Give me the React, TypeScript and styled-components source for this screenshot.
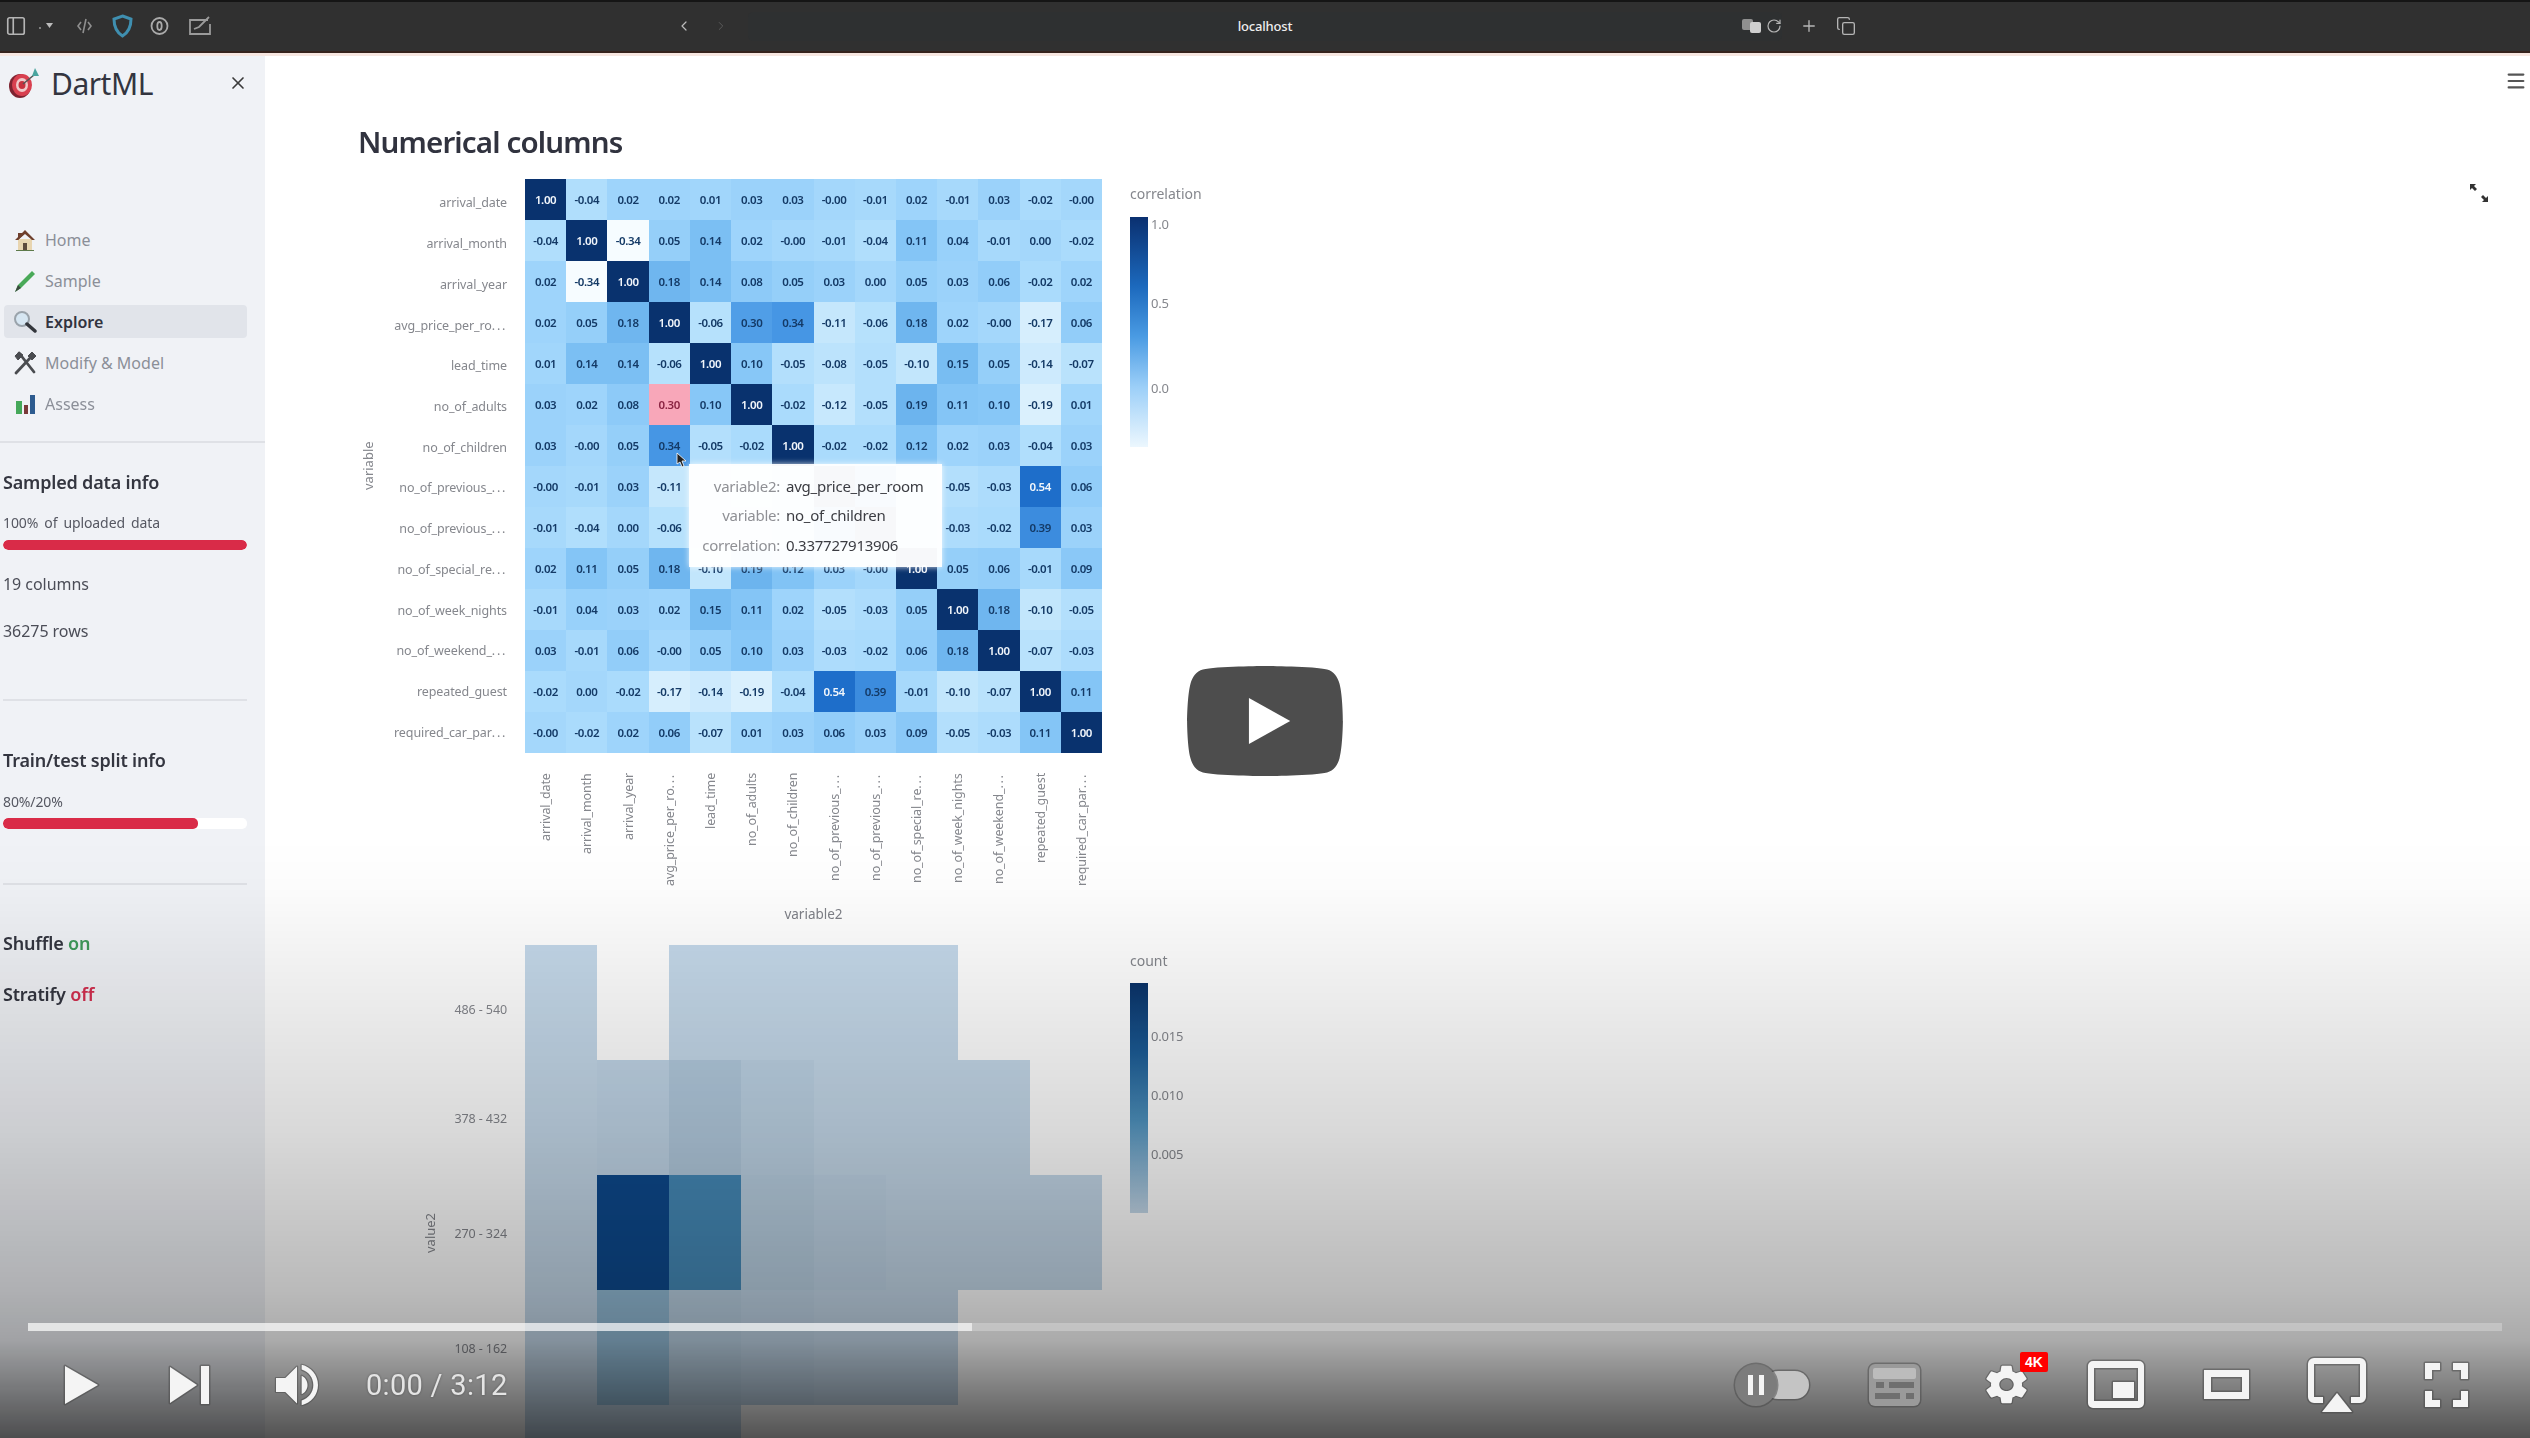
import React from 'react';
import styled, { createGlobalStyle } from 'styled-components';
import { ChevronLeft, ChevronRight, Copy, Menu, PanelLeft, Plus, RotateCw, X } from 'lucide-react';

const GlobalStyle = createGlobalStyle`
  html, body {
    margin: 0;
    padding: 0;
    height: 100%;
    overflow: hidden;
    background: #fff;
    font-family: "Noto Sans", "Open Sans", sans-serif;
  }
  * { box-sizing: border-box; }
`;

const Frame = styled.div`
  position: relative;
  width: 2530px;
  height: 1438px;
  overflow: hidden;
`;

const Page = styled.div`
  width: 100%;
  height: 100%;
  display: flex;
  flex-direction: column;
  filter: blur(0.7px);
`;

/* browser chrome */
const BrowserBar = styled.header`
  height: 56px;
  flex: none;
  display: flex;
  align-items: center;
  padding: 2px 0 5px 5px;
  background: #303030;
  border-top: 2px solid #151515;
  border-bottom: 3px solid #f7e6e0;
  box-shadow: inset 0 -2px 0 #35221c;
  color: #b5b5b5;
`;

const ToolSlot = styled.span<{ $ml?: number; $w: number }>`
  display: inline-flex;
  align-items: center;
  justify-content: center;
  flex: none;
  width: ${(p) => p.$w}px;
  margin-left: ${(p) => p.$ml ?? 0}px;
`;

const UrlBar = styled.div`
  flex: none;
  width: 1034px;
  height: 29px;
  margin-left: 20px;
  display: flex;
  align-items: center;
  border-radius: 5px;
  background: #2e3031;
`;

const UrlSide = styled.div`
  flex: 1;
  display: flex;
  justify-content: flex-end;
  align-items: center;
  gap: 4px;
`;

const UrlText = styled.span`
  font-size: 13px;
  font-weight: 500;
  color: #eee;
  letter-spacing: -0.2px;
`;

/* app body */
const Body = styled.div`
  flex: 1;
  display: flex;
  min-height: 0;
`;

const Sidebar = styled.aside`
  flex: none;
  width: 265px;
  padding: 8px 0 0 3px;
  background: #f0f2f6;
  color: #31333f;
`;

const BrandRow = styled.div`
  height: 38px;
  display: flex;
  align-items: center;
  margin-left: 5px;
`;

const BrandName = styled.span`
  margin-left: 11px;
  font-size: 30px;
  letter-spacing: -0.5px;
  color: #33353f;
`;

const CloseButton = styled.span`
  display: flex;
  margin-left: auto;
  margin-right: 17px;
  color: #3a3a3a;
`;

const Nav = styled.nav`
  margin-top: 121px;
  display: flex;
  flex-direction: column;
  gap: 8px;
`;

const NavItem = styled.div<{ $active?: boolean }>`
  width: 243px;
  height: 33px;
  margin-left: 1px;
  padding-left: 9px;
  display: flex;
  align-items: center;
  gap: 8px;
  border-radius: 4px;
  font-size: 16px;
  font-weight: ${(p) => (p.$active ? 600 : 400)};
  color: ${(p) => (p.$active ? '#31333f' : '#8b8f98')};
  background: ${(p) => (p.$active ? '#e1e4ea' : 'transparent')};
`;

const Divider = styled.hr<{ $mt: number; $full?: boolean }>`
  height: 2px;
  border: 0;
  margin: ${(p) => p.$mt}px 0 0 ${(p) => (p.$full ? -3 : 0)}px;
  width: ${(p) => (p.$full ? 265 : 244)}px;
  background: #dfe1e6;
`;

const SideHeading = styled.h4<{ $mt: number }>`
  margin: ${(p) => p.$mt}px 0 0;
  font-size: 18px;
  line-height: 24px;
  font-weight: 600;
  letter-spacing: -0.01em;
  color: #343640;
`;

const SideCaption = styled.div<{ $mt: number }>`
  margin-top: ${(p) => p.$mt}px;
  font-size: 14px;
  line-height: 18px;
  letter-spacing: -0.1px;
  word-spacing: 2.5px;
  color: #565862;
`;

const SideText = styled.div<{ $mt: number }>`
  margin-top: ${(p) => p.$mt}px;
  font-size: 16px;
  line-height: 20px;
  letter-spacing: -0.05px;
  color: #4b4d57;
`;

const Meter = styled.div<{ $mt: number; $h: number }>`
  width: 244px;
  height: ${(p) => p.$h}px;
  margin-top: ${(p) => p.$mt}px;
  border-radius: 5px;
  background: #fff;
  overflow: hidden;
`;

const MeterFill = styled.div`
  height: 100%;
  border-radius: 5px;
  background: #d92b48;
`;

const Flag = styled.span<{ $on?: boolean }>`
  color: ${(p) => (p.$on ? '#3f9a5a' : '#d32f4f')};
`;

const Main = styled.main`
  flex: 1;
  min-width: 0;
  padding-left: 93px;
  background: #fff;
`;

const TopRow = styled.div`
  height: 66px;
  padding: 14px 3px 0 0;
  display: flex;
  justify-content: flex-end;
  color: #555;
`;

const Title = styled.h2`
  margin: 0 0 17px;
  font-size: 29.5px;
  line-height: 40px;
  font-weight: 600;
  letter-spacing: -0.85px;
  color: #31333f;
`;

const PlotRow = styled.section<{ $mb?: number }>`
  display: flex;
  align-items: flex-start;
  margin-bottom: ${(p) => p.$mb ?? 0}px;
`;

const AxisTitle = styled.div<{ $ml?: number; $h: number }>`
  flex: none;
  width: 20px;
  height: ${(p) => p.$h}px;
  margin-left: ${(p) => p.$ml ?? 0}px;
  display: flex;
  align-items: center;
  justify-content: center;
  writing-mode: vertical-rl;
  transform: rotate(180deg);
  font-size: 13px;
  color: #85878d;
`;

const TickColumn = styled.div<{ $w: number }>`
  flex: none;
  width: ${(p) => p.$w}px;
  padding-right: 18px;
  display: flex;
  flex-direction: column;
`;

const RowTick = styled.div<{ $h: number; $pt: number }>`
  height: ${(p) => p.$h}px;
  padding-top: ${(p) => p.$pt}px;
  display: flex;
  align-items: center;
  justify-content: flex-end;
  white-space: nowrap;
  font-size: 12.5px;
  letter-spacing: -0.1px;
  color: #85878d;
`;

const Dots = styled.span`
  letter-spacing: 1.7px;
`;

const PlotColumn = styled.div`
  flex: none;
  width: 577px;
  display: flex;
  flex-direction: column;
`;

const HeatWrap = styled.div`
  position: relative;
`;

const HeatGrid = styled.div<{ $cols: number; $rowH: number }>`
  display: grid;
  grid-template-columns: repeat(${(p) => p.$cols}, 1fr);
  grid-auto-rows: ${(p) => p.$rowH}px;
`;

const HeatCell = styled.div<{ $light?: boolean }>`
  display: flex;
  align-items: center;
  justify-content: center;
  font-size: 11.5px;
  font-weight: 600;
  letter-spacing: -0.4px;
  color: ${(p) => (p.$light ? '#f2f6fb' : '#143a66')};
`;

const ColLabels = styled.div`
  margin-top: 20px;
  height: 120px;
  display: grid;
  grid-template-columns: repeat(14, 1fr);
`;

const ColLabel = styled.div`
  display: flex;
  justify-content: center;
`;

const ColLabelText = styled.span`
  height: 120px;
  writing-mode: vertical-rl;
  transform: rotate(180deg);
  text-align: right;
  white-space: nowrap;
  font-size: 12.5px;
  letter-spacing: -0.1px;
  color: #85878d;
`;

const XTitle = styled.div`
  margin-top: 13px;
  text-align: center;
  font-size: 13.5px;
  line-height: 16px;
  color: #7f8188;
`;

const Legend = styled.div<{ $pt: number; $gap: number }>`
  flex: none;
  margin-left: 28px;
  padding-top: ${(p) => p.$pt}px;
  display: flex;
  flex-direction: column;
  gap: ${(p) => p.$gap}px;
`;

const LegendTitle = styled.div`
  font-size: 14px;
  line-height: 16px;
  color: #85878d;
`;

const LegendBody = styled.div`
  display: flex;
  gap: 3px;
`;

const ColorBar = styled.div<{ $count?: boolean }>`
  width: 18px;
  height: 230px;
  background: ${(p) =>
    p.$count
      ? 'linear-gradient(#0a3268, #1c5c96 30%, #4f93bf 60%, #c5d9ea)'
      : 'linear-gradient(#0a3070, #1c69bd 30%, #4a9be3 52%, #9ccff8 74%, #ecf7fe)'};
`;

const LegendTicks = styled.div`
  display: flex;
  flex-direction: column;
`;

const LegendTick = styled.div<{ $mt: number }>`
  margin-top: ${(p) => p.$mt}px;
  font-size: 13px;
  line-height: 16px;
  letter-spacing: -0.2px;
  color: #85878d;
`;

const ExpandButton = styled.span`
  display: flex;
  margin: 4px 41px 0 auto;
`;

const HoverCard = styled.div`
  position: absolute;
  left: 164px;
  top: 285px;
  width: 253px;
  height: 103px;
  padding: 7px 0 0 6px;
  display: grid;
  grid-template-columns: 85px auto;
  grid-auto-rows: 29.5px;
  column-gap: 6px;
  align-items: center;
  background: rgba(255, 255, 255, 0.97);
  box-shadow: 0 0 6px rgba(255, 255, 255, 0.8);
  font-size: 15px;
  letter-spacing: -0.25px;
  white-space: nowrap;
`;

const HoverKey = styled.span`
  text-align: right;
  color: #8f9095;
`;

const HoverValue = styled.span`
  color: #3b3c42;
`;

const Cursor = styled.svg`
  position: absolute;
  left: 151px;
  top: 273px;
`;

/* player chrome, lying over the video frame */
const Player = styled.div`
  position: absolute;
  left: 0;
  right: 0;
  bottom: 0;
  height: 600px;
  display: flex;
  flex-direction: column;
  justify-content: flex-end;
  background: linear-gradient(
    rgba(0, 0, 0, 0) 0,
    rgba(0, 0, 0, 0.01) 49px,
    rgba(0, 0, 0, 0.06) 130px,
    rgba(0, 0, 0, 0.15) 292px,
    rgba(0, 0, 0, 0.27) 452px,
    rgba(0, 0, 0, 0.33) 502px,
    rgba(0, 0, 0, 0.5) 550px,
    rgba(0, 0, 0, 0.68) 600px
  );
`;

const BigPlay = styled.svg`
  position: absolute;
  left: 50%;
  top: 721px;
  transform: translate(-50%, -50%);
`;

const ProgressTrack = styled.div`
  height: 8px;
  margin: 0 28px;
  background: rgba(255, 255, 255, 0.25);
`;

const ProgressLoaded = styled.div`
  width: 944px;
  height: 100%;
  background: rgba(255, 255, 255, 0.6);
`;

const Controls = styled.div`
  height: 107px;
  display: flex;
  align-items: center;
  justify-content: space-between;
  padding: 0 60px 0 63px;
`;

const ControlGroup = styled.div`
  display: flex;
  align-items: center;
`;

const PlayerIcon = styled.svg<{ $ml?: number }>`
  flex: none;
  margin-left: ${(p) => p.$ml ?? 0}px;
  overflow: visible;
  fill: #f4f4f4;
  stroke: rgba(70, 70, 70, 0.5);
  stroke-width: 3px;
  stroke-linejoin: round;
  paint-order: stroke;
`;

const TimeText = styled.span`
  margin-left: 48px;
  font-family: Roboto, "Liberation Sans", sans-serif;
  font-size: 29px;
  letter-spacing: 0.3px;
  color: #e4e4e4;
  text-shadow: 0 0 3px rgba(0, 0, 0, 0.35);
`;

const SettingsSlot = styled.span`
  position: relative;
  display: flex;
  margin-left: 63px;
`;

const QualityBadge = styled.span`
  position: absolute;
  left: 36px;
  top: -9px;
  width: 28px;
  height: 20px;
  display: flex;
  align-items: center;
  justify-content: center;
  border-radius: 2px;
  background: #f00;
  color: #fff;
  font-family: "Liberation Sans", sans-serif;
  font-size: 14px;
  font-weight: 700;
`;

/* heatmap data */
const VARS = [
  'arrival_date', 'arrival_month', 'arrival_year', 'avg_price_per_ro...', 'lead_time', 'no_of_adults',
  'no_of_children', 'no_of_previous_...', 'no_of_previous_...', 'no_of_special_re...', 'no_of_week_nights',
  'no_of_weekend_...', 'repeated_guest', 'required_car_par...',
];

const CORR = [
  ['1.00', '-0.04', '0.02', '0.02', '0.01', '0.03', '0.03', '-0.00', '-0.01', '0.02', '-0.01', '0.03', '-0.02', '-0.00'],
  ['-0.04', '1.00', '-0.34', '0.05', '0.14', '0.02', '-0.00', '-0.01', '-0.04', '0.11', '0.04', '-0.01', '0.00', '-0.02'],
  ['0.02', '-0.34', '1.00', '0.18', '0.14', '0.08', '0.05', '0.03', '0.00', '0.05', '0.03', '0.06', '-0.02', '0.02'],
  ['0.02', '0.05', '0.18', '1.00', '-0.06', '0.30', '0.34', '-0.11', '-0.06', '0.18', '0.02', '-0.00', '-0.17', '0.06'],
  ['0.01', '0.14', '0.14', '-0.06', '1.00', '0.10', '-0.05', '-0.08', '-0.05', '-0.10', '0.15', '0.05', '-0.14', '-0.07'],
  ['0.03', '0.02', '0.08', '0.30', '0.10', '1.00', '-0.02', '-0.12', '-0.05', '0.19', '0.11', '0.10', '-0.19', '0.01'],
  ['0.03', '-0.00', '0.05', '0.34', '-0.05', '-0.02', '1.00', '-0.02', '-0.02', '0.12', '0.02', '0.03', '-0.04', '0.03'],
  ['-0.00', '-0.01', '0.03', '-0.11', '-0.08', '-0.12', '-0.02', '1.00', '0.47', '0.03', '-0.05', '-0.03', '0.54', '0.06'],
  ['-0.01', '-0.04', '0.00', '-0.06', '-0.05', '-0.05', '-0.02', '0.47', '1.00', '-0.00', '-0.03', '-0.02', '0.39', '0.03'],
  ['0.02', '0.11', '0.05', '0.18', '-0.10', '0.19', '0.12', '0.03', '-0.00', '1.00', '0.05', '0.06', '-0.01', '0.09'],
  ['-0.01', '0.04', '0.03', '0.02', '0.15', '0.11', '0.02', '-0.05', '-0.03', '0.05', '1.00', '0.18', '-0.10', '-0.05'],
  ['0.03', '-0.01', '0.06', '-0.00', '0.05', '0.10', '0.03', '-0.03', '-0.02', '0.06', '0.18', '1.00', '-0.07', '-0.03'],
  ['-0.02', '0.00', '-0.02', '-0.17', '-0.14', '-0.19', '-0.04', '0.54', '0.39', '-0.01', '-0.10', '-0.07', '1.00', '0.11'],
  ['-0.00', '-0.02', '0.02', '0.06', '-0.07', '0.01', '0.03', '0.06', '0.03', '0.09', '-0.05', '-0.03', '0.11', '1.00'],
];

const SCALE: [number, number[]][] = [
  [-0.34, [246, 252, 255]],
  [-0.17, [214, 238, 253]],
  [-0.06, [182, 225, 252]],
  [0.02, [158, 212, 251]],
  [0.11, [132, 197, 246]],
  [0.19, [108, 180, 238]],
  [0.34, [70, 150, 228]],
  [0.54, [30, 110, 202]],
  [0.7, [16, 84, 160]],
  [1, [9, 50, 110]],
];

function corrColor(v: number): string {
  for (let i = 1; i < SCALE.length; i++) {
    const [hi, hiC] = SCALE[i];
    const [lo, loC] = SCALE[i - 1];
    if (v <= hi) {
      const t = (v - lo) / (hi - lo);
      const c = loC.map((x, k) => Math.round(x + (hiC[k] - x) * t));
      return `rgb(${c.join(',')})`;
    }
  }
  return 'rgb(9,50,110)';
}

// cells the hover card sits fully on top of have no visible value
const hiddenByCard = (r: number, c: number) => (r === 7 || r === 8) && c >= 4 && c <= 9;

function tickLabel(name: string) {
  if (!name.endsWith('...')) return name;
  return (
    <>
      {name.slice(0, -3)}
      <Dots>...</Dots>
    </>
  );
}

const L = '#c5d9ea';
const DENSITY: (string | null)[][] = [
  [L, null, L, L, L, L, null, null],
  [L, '#c1d6e8', '#b3cbdf', '#bed4e6', L, L, L, null],
  [L, '#0e4a8e', '#468bb9', '#bbd2e4', '#c1d6e8', L, L, L],
  [L, '#94bdd8', '#bbd2e4', '#c1d6e8', L, L, null, null],
  [L, L, L, null, null, null, null, null],
];

function TargetLogo() {
  return (
    <svg width="32" height="32" viewBox="0 0 32 32">
      <ellipse cx="12" cy="19" rx="11" ry="12" fill="#7d2330" />
      <ellipse cx="14" cy="18" rx="10" ry="11" fill="#d8404f" />
      <ellipse cx="14" cy="18" rx="6" ry="7" fill="#f1c9c9" />
      <ellipse cx="14" cy="18" rx="3.5" ry="4" fill="#c8323f" />
      <path d="M15 17 L26 8" stroke="#555" strokeWidth="1.5" />
      <path d="M24 9 L27 1 L31 9 Z" fill="#4aa59f" />
    </svg>
  );
}

const NAV: { label: string; active?: boolean; icon: React.ReactNode }[] = [
  {
    label: 'Home',
    icon: (
      <svg width="24" height="24" viewBox="0 0 24 24">
        <path d="M5 11 H19 V22 H5 Z" fill="#e8d5b0" />
        <path d="M2 12 L12 2 L22 12 L19 12 L12 6 L5 12 Z" fill="#6e3f2c" />
        <path d="M5 5 H12 L5 12 Z" fill="#6e3f2c" />
        <path d="M10 15 H14 V22 H10 Z" fill="#5d4a3c" />
        <path d="M3 22 H21 V23 H3 Z" fill="#5d7a4a" />
      </svg>
    ),
  },
  {
    label: 'Sample',
    icon: (
      <svg width="24" height="24" viewBox="0 0 24 24">
        <path d="M2 23 L5 16 L19 2 L22 5 L8 19 Z" fill="#49a958" />
        <path d="M2 23 L5 16 L8 19 Z" fill="#3b4a3e" />
      </svg>
    ),
  },
  {
    label: 'Explore',
    active: true,
    icon: (
      <svg width="24" height="24" viewBox="0 0 24 24">
        <circle cx="9" cy="9" r="7" fill="#d6e6f2" stroke="#9aa3ab" strokeWidth="2" />
        <path d="M14 14 L22 21" stroke="#33363c" strokeWidth="3.5" strokeLinecap="round" />
      </svg>
    ),
  },
  {
    label: 'Modify & Model',
    icon: (
      <svg width="24" height="24" viewBox="0 0 24 24" fill="none" stroke="#4a4c50" strokeWidth="2.8">
        <path d="M3 22 L18 6 M6 2 L21 21" strokeLinecap="round" />
        <path d="M15 5 L19 1 L23 5 L19 9 Z" fill="#4a4c50" strokeWidth="1" />
        <path d="M2 5 L6 1 L10 4 L5 9 Z" fill="#4a4c50" strokeWidth="1" />
      </svg>
    ),
  },
  {
    label: 'Assess',
    icon: (
      <svg width="24" height="24" viewBox="0 0 24 24">
        <path d="M3 9 H9 V22 H3 Z" fill="#45a85a" />
        <path d="M11 13 H15 V22 H11 Z" fill="#7a3a3a" />
        <path d="M17 3 H22 V22 H17 Z" fill="#2d5b8f" />
      </svg>
    ),
  },
];

function App() {
  const tickH = 40.73;
  return (
    <Frame>
      <GlobalStyle />
      <Page>
        <BrowserBar>
          <ToolSlot $w={22}><PanelLeft size={22} strokeWidth={1.8} /></ToolSlot>
          <ToolSlot $w={18} $ml={11}>
            <svg width="18" height="10" viewBox="0 0 18 10">
              <circle cx="2" cy="7" r="1" fill="#999" />
              <path d="M8 2 L15 2 L11.5 7 Z" fill="#bbb" />
            </svg>
          </ToolSlot>
          <ToolSlot $w={15} $ml={21}>
            <svg width="15" height="18" viewBox="0 0 15 18" fill="none" stroke="#8f8f8f" strokeWidth="1.6">
              <path d="M4 5 L1 9 L4 13 M11 5 L14 9 L11 13 M9 2 L6 16" />
            </svg>
          </ToolSlot>
          <ToolSlot $w={21} $ml={20}>
            <svg width="21" height="24" viewBox="0 0 21 24" fill="none" stroke="#3f8fb0" strokeWidth="3">
              <path d="M10.5 2 L19 5 C19 13 17 18 10.5 22 C4 18 2 13 2 5 Z" />
            </svg>
          </ToolSlot>
          <ToolSlot $w={19} $ml={17}>
            <svg width="19" height="20" viewBox="0 0 19 20" fill="none" stroke="#aaa" strokeWidth="1.8">
              <circle cx="9.5" cy="10" r="8" />
              <ellipse cx="9.5" cy="10" rx="2.2" ry="4" />
            </svg>
          </ToolSlot>
          <ToolSlot $w={26} $ml={19}>
            <svg width="26" height="20" viewBox="0 0 26 20" fill="none" stroke="#9a9a9a" strokeWidth="1.8">
              <path d="M20 4 H2 V18 H22 V8" />
              <path d="M6 13 L11 11 L21 1" />
            </svg>
          </ToolSlot>
          <ToolSlot $w={16} $ml={462}><ChevronLeft size={26} strokeWidth={1.8} color="#bbb" /></ToolSlot>
          <ToolSlot $w={14} $ml={22}><ChevronRight size={24} strokeWidth={1.6} color="#5d5d5d" /></ToolSlot>
          <UrlBar>
            <UrlSide />
            <UrlText>localhost</UrlText>
            <UrlSide>
              <svg width="21" height="18" viewBox="0 0 21 18">
                <rect x="1" y="2" width="11" height="11" rx="2" fill="#8f8f8f" />
                <rect x="9" y="5" width="11" height="11" rx="2" fill="#cfcfcf" />
              </svg>
              <RotateCw size={16} strokeWidth={1.8} />
            </UrlSide>
          </UrlBar>
          <ToolSlot $w={18} $ml={18}><Plus size={18} strokeWidth={1.8} /></ToolSlot>
          <ToolSlot $w={20} $ml={18}><Copy size={20} strokeWidth={1.6} /></ToolSlot>
        </BrowserBar>

        <Body>
          <Sidebar>
            <BrandRow>
              <TargetLogo />
              <BrandName>DartML</BrandName>
              <CloseButton><X size={20} strokeWidth={2} /></CloseButton>
            </BrandRow>
            <Nav>
              {NAV.map((item) => (
                <NavItem key={item.label} $active={item.active}>
                  {item.icon}
                  {item.label}
                </NavItem>
              ))}
            </Nav>
            <Divider $mt={21} $full />
            <SideHeading $mt={27}>Sampled data info</SideHeading>
            <SideCaption $mt={20}>100% of uploaded data</SideCaption>
            <Meter $mt={8} $h={10}><MeterFill style={{ width: '100%' }} /></Meter>
            <SideText $mt={24}>19 columns</SideText>
            <SideText $mt={27}>36275 rows</SideText>
            <Divider $mt={58} />
            <SideHeading $mt={47}>Train/test split info</SideHeading>
            <SideCaption $mt={21}>80%/20%</SideCaption>
            <Meter $mt={7} $h={11}><MeterFill style={{ width: '80%' }} /></Meter>
            <Divider $mt={54} />
            <SideHeading $mt={46}>Shuffle <Flag $on>on</Flag></SideHeading>
            <SideHeading $mt={27}>Stratify <Flag>off</Flag></SideHeading>
          </Sidebar>

          <Main>
            <TopRow><Menu size={22} strokeWidth={2.4} /></TopRow>
            <Title>Numerical columns</Title>

            <PlotRow $mb={23}>
              <AxisTitle $h={574}>variable</AxisTitle>
              <TickColumn $w={147}>
                {VARS.map((name, i) => (
                  <RowTick key={i} $h={tickH} $pt={7}>{tickLabel(name)}</RowTick>
                ))}
              </TickColumn>
              <PlotColumn>
                <HeatWrap>
                  <HeatGrid $cols={14} $rowH={41}>
                    {CORR.flatMap((row, r) =>
                      row.map((value, c) => {
                        const v = parseFloat(value);
                        const pink = r === 5 && c === 3;
                        return (
                          <HeatCell
                            key={`${r}-${c}`}
                            $light={v >= 0.5}
                            style={{
                              background: pink ? '#f8a7b9' : corrColor(v),
                              color: pink ? '#8a2442' : undefined,
                            }}
                          >
                            {hiddenByCard(r, c) ? null : value}
                          </HeatCell>
                        );
                      }),
                    )}
                  </HeatGrid>
                  <HoverCard>
                    <HoverKey>variable2:</HoverKey>
                    <HoverValue>avg_price_per_room</HoverValue>
                    <HoverKey>variable:</HoverKey>
                    <HoverValue>no_of_children</HoverValue>
                    <HoverKey>correlation:</HoverKey>
                    <HoverValue>0.337727913906</HoverValue>
                  </HoverCard>
                  <Cursor width="12" height="16" viewBox="0 0 12 16">
                    <path d="M1 1 L1 12 L4 10 L6 15 L8 14 L6 9 L10 9 Z" fill="#222" stroke="#fff" strokeWidth="0.8" />
                  </Cursor>
                </HeatWrap>
                <ColLabels>
                  {VARS.map((name, i) => (
                    <ColLabel key={i}><ColLabelText>{tickLabel(name)}</ColLabelText></ColLabel>
                  ))}
                </ColLabels>
                <XTitle>variable2</XTitle>
              </PlotColumn>
              <Legend $pt={7} $gap={15}>
                <LegendTitle>correlation</LegendTitle>
                <LegendBody>
                  <ColorBar />
                  <LegendTicks>
                    <LegendTick $mt={-1}>1.0</LegendTick>
                    <LegendTick $mt={63}>0.5</LegendTick>
                    <LegendTick $mt={69}>0.0</LegendTick>
                  </LegendTicks>
                </LegendBody>
              </Legend>
              <ExpandButton>
                <svg width="20" height="20" viewBox="0 0 20 20" fill="#333">
                  <path d="M1 1 H7 L5 3 L8 6 L6 8 L3 5 L1 7 Z" />
                  <path d="M19 19 H13 L15 17 L12 14 L14 12 L17 15 L19 13 Z" />
                </svg>
              </ExpandButton>
            </PlotRow>

            <PlotRow>
              <AxisTitle $ml={62} $h={575}>value2</AxisTitle>
              <TickColumn $w={85}>
                <RowTick $h={115} $pt={13}>486 - 540</RowTick>
                <RowTick $h={115} $pt={1}>378 - 432</RowTick>
                <RowTick $h={115} $pt={1}>270 - 324</RowTick>
                <RowTick $h={115} $pt={1}>108 - 162</RowTick>
              </TickColumn>
              <PlotColumn>
                <HeatGrid $cols={8} $rowH={115}>
                  {DENSITY.flatMap((row, r) =>
                    row.map((color, c) => (
                      <HeatCell key={`${r}-${c}`} style={{ background: color ?? 'transparent' }} />
                    )),
                  )}
                </HeatGrid>
              </PlotColumn>
              <Legend $pt={8} $gap={14}>
                <LegendTitle>count</LegendTitle>
                <LegendBody>
                  <ColorBar $count />
                  <LegendTicks>
                    <LegendTick $mt={45}>0.015</LegendTick>
                    <LegendTick $mt={43}>0.010</LegendTick>
                    <LegendTick $mt={43}>0.005</LegendTick>
                  </LegendTicks>
                </LegendBody>
              </Legend>
            </PlotRow>
          </Main>
        </Body>
      </Page>

      <Player>
        <ProgressTrack><ProgressLoaded /></ProgressTrack>
        <Controls>
          <ControlGroup>
            <PlayerIcon width="37" height="44" viewBox="0 0 37 44">
              <path d="M2 3 L35 22 L2 41 Z" />
            </PlayerIcon>
            <PlayerIcon $ml={68} width="42" height="44" viewBox="0 0 42 44">
              <path d="M2 4 L29 22 L2 40 Z" />
              <rect x="33" y="3" width="8" height="38" />
            </PlayerIcon>
            <PlayerIcon $ml={66} width="42" height="46" viewBox="8 8 18 20" preserveAspectRatio="none">
              <path
                style={{ strokeWidth: 1 }}
                d="M8,21 L12,21 L17,26 L17,10 L12,15 L8,15 L8,21 Z M19,14 L19,22 C20.48,21.32 21.5,19.77 21.5,18 C21.5,16.26 20.48,14.74 19,14 Z M19,11.29 C21.89,12.15 24,14.83 24,18 C24,21.17 21.89,23.85 19,24.71 L19,26.77 C23.01,25.86 26,22.28 26,18 C26,13.72 23.01,10.14 19,9.23 L19,11.29 Z"
              />
            </PlayerIcon>
            <TimeText>0:00 / 3:12</TimeText>
          </ControlGroup>

          <ControlGroup>
            <PlayerIcon width="76" height="44" viewBox="0 0 76 44">
              <rect x="30" y="8" width="45" height="28" rx="14" fill="#c4c4c4" />
              <ellipse cx="22" cy="22" rx="21" ry="21" fill="#7c7c7c" />
              <rect x="14" y="12" width="5" height="20" fill="#f4f4f4" stroke="none" />
              <rect x="25" y="12" width="5" height="20" fill="#f4f4f4" stroke="none" />
            </PlayerIcon>
            <PlayerIcon $ml={58} width="53" height="44" viewBox="0 0 53 44">
              <rect x="1" y="1" width="51" height="42" rx="6" fill="#9a9a9a" />
              <rect x="5" y="5" width="43" height="11" rx="2" fill="#bcbcbc" stroke="none" />
              <rect x="8" y="19" width="8" height="6" fill="#6f6f6f" stroke="none" />
              <rect x="21" y="19" width="25" height="6" fill="#6f6f6f" stroke="none" />
              <rect x="7" y="30" width="25" height="6" fill="#6f6f6f" stroke="none" />
              <rect x="38" y="30" width="8" height="6" fill="#6f6f6f" stroke="none" />
            </PlayerIcon>
            <SettingsSlot>
              <PlayerIcon width="45" height="47" viewBox="9.3 8 17.4 20" preserveAspectRatio="none">
                <path
                  style={{ strokeWidth: 1, fillRule: 'evenodd' }}
                  d="m 23.94,18.78 c .03,-0.25 .05,-0.51 .05,-0.78 0,-0.27 -0.02,-0.52 -0.05,-0.78 l 1.68,-1.32 c .15,-0.12 .19,-0.33 .09,-0.51 l -1.6,-2.76 c -0.09,-0.17 -0.31,-0.24 -0.48,-0.17 l -1.99,.8 c -0.41,-0.32 -0.86,-0.58 -1.35,-0.78 l -0.30,-2.12 c -0.02,-0.19 -0.19,-0.33 -0.39,-0.33 l -3.2,0 c -0.2,0 -0.36,.14 -0.39,.33 l -0.30,2.12 c -0.48,.2 -0.93,.47 -1.35,.78 l -1.99,-0.8 c -0.18,-0.07 -0.39,0 -0.48,.17 l -1.6,2.76 c -0.10,.17 -0.05,.39 .09,.51 l 1.68,1.32 c -0.03,.25 -0.05,.52 -0.05,.78 0,.26 .02,.52 .05,.78 l -1.68,1.32 c -0.15,.12 -0.19,.33 -0.09,.51 l 1.6,2.76 c .09,.17 .31,.24 .48,.17 l 1.99,-0.8 c .41,.32 .86,.58 1.35,.78 l .30,2.12 c .02,.19 .19,.33 .39,.33 l 3.2,0 c .2,0 .36,-0.14 .39,-0.33 l .30,-2.12 c .48,-0.2 .93,-0.47 1.35,-0.78 l 1.99,.8 c .18,.07 .39,0 .48,-0.17 l 1.6,-2.76 c .09,-0.17 .05,-0.39 -0.09,-0.51 l -1.68,-1.32 0,0 z m -5.94,2.01 c -1.54,0 -2.8,-1.25 -2.8,-2.8 0,-1.54 1.25,-2.8 2.8,-2.8 1.54,0 2.8,1.25 2.8,2.8 0,1.54 -1.25,2.8 -2.8,2.8 l 0,0 z"
                />
              </PlayerIcon>
              <QualityBadge>4K</QualityBadge>
            </SettingsSlot>
            <PlayerIcon $ml={58} width="58" height="49" viewBox="0 0 58 49">
              <path
                fillRule="evenodd"
                d="M6 1 H52 A5 5 0 0 1 57 6 V43 A5 5 0 0 1 52 48 H6 A5 5 0 0 1 1 43 V6 A5 5 0 0 1 6 1 Z M7 8 V41 H51 V8 Z"
              />
              <rect x="26" y="22" width="21" height="16" />
            </PlayerIcon>
            <PlayerIcon $ml={58} width="47" height="31" viewBox="0 0 47 31">
              <path fillRule="evenodd" d="M1 1 H46 V30 H1 Z M8 8 V23 H39 V8 Z" />
            </PlayerIcon>
            <PlayerIcon $ml={56} width="62" height="56" viewBox="0 0 62 56">
              <path d="M17 46 H8 A6 6 0 0 1 2 40 V7 A6 6 0 0 1 8 1 H54 A6 6 0 0 1 60 7 V40 A6 6 0 0 1 54 46 H45 V40 H54 V7 H8 V40 H17 Z" />
              <path d="M31 36 L46 55 H16 Z" />
            </PlayerIcon>
            <PlayerIcon $ml={55} width="47" height="48" viewBox="0 0 47 48">
              <path d="M2 2 H17 V9 H9 V18 H2 Z" />
              <path d="M30 2 H45 V18 H38 V9 H30 Z" />
              <path d="M2 30 H9 V39 H17 V46 H2 Z" />
              <path d="M38 30 H45 V46 H30 V39 H38 Z" />
            </PlayerIcon>
          </ControlGroup>
        </Controls>
      </Player>

      <BigPlay width="156" height="110" viewBox="0 0 68 48">
        <path
          fill="#4d4d4d"
          d="M66.52,7.74c-0.78-2.93-2.49-5.41-5.42-6.19C55.79,.13,34,0,34,0S12.21,.13,6.9,1.55C3.97,2.33,2.27,4.81,1.48,7.74C0.06,13.05,0,24,0,24s0.06,10.95,1.48,16.26c0.78,2.93,2.49,5.41,5.42,6.19C12.21,47.87,34,48,34,48s21.79-0.13,27.1-1.55c2.93-0.78,4.64-3.26,5.42-6.19C67.94,34.95,68,24,68,24S67.94,13.05,66.52,7.74z"
        />
        <path fill="#fff" d="M45,24 27,14 27,34" />
      </BigPlay>
    </Frame>
  );
}

export default App;
